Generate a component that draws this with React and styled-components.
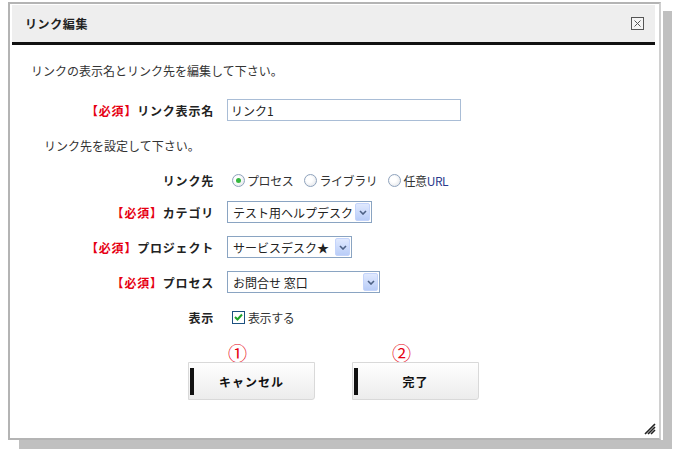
import React from 'react'
import styled, { createGlobalStyle } from 'styled-components'

//Component
function App() {
  return (
    <>
      <GlobalStyle />
      <Page>
        <Dialog>
          <TitleBar>
            <Title>リンク編集</Title>
            <CloseButton aria-label="閉じる">
              <svg width="13" height="13" viewBox="0 0 13 13">
                <rect x="0.5" y="0.5" width="12" height="12" fill="#f4f4f4" stroke="#555" />
                <path d="M3.5 3.5 L9.5 9.5 M9.5 3.5 L3.5 9.5" stroke="#555" strokeWidth="1" />
              </svg>
            </CloseButton>
          </TitleBar>

          <Body>
            <Intro>リンクの表示名とリンク先を編集して下さい。</Intro>

            <Row $mt={20}>
              <Label><Required>【必須】</Required>リンク表示名</Label>
              <TextInput defaultValue="リンク1" />
            </Row>

            <Note>リンク先を設定して下さい。</Note>

            <Row $mt={18} $h={16}>
              <Label>リンク先</Label>
              <Choice>
                <Radio $checked />プロセス
              </Choice>
              <Choice>
                <Radio />ライブラリ
              </Choice>
              <Choice>
                <Radio />任意<Latin>URL</Latin>
              </Choice>
            </Row>

            <Row $mt={13}>
              <Label><Required>【必須】</Required>カテゴリ</Label>
              <Select $w={145}>
                <SelectValue>テスト用ヘルプデスク</SelectValue>
                <SelectArrow><Chevron /></SelectArrow>
              </Select>
            </Row>

            <Row $mt={13}>
              <Label><Required>【必須】</Required>プロジェクト</Label>
              <Select $w={125}>
                <SelectValue>サービスデスク★</SelectValue>
                <SelectArrow><Chevron /></SelectArrow>
              </Select>
            </Row>

            <Row $mt={13}>
              <Label><Required>【必須】</Required>プロセス</Label>
              <Select $w={153}>
                <SelectValue>お問合せ 窓口</SelectValue>
                <SelectArrow><Chevron /></SelectArrow>
              </Select>
            </Row>

            <Row $mt={13}>
              <Label>表示</Label>
              <Choice>
                <CheckBox>
                  <svg width="9" height="8" viewBox="0 0 9 8">
                    <path d="M1 4 L3.5 6.5 L8 1.5" fill="none" stroke="#1fa32a" strokeWidth="2" />
                  </svg>
                </CheckBox>
                表示する
              </Choice>
            </Row>

            <Actions>
              <ActionGroup>
                <Mark>①</Mark>
                <ActionButton><ButtonBar /><span>キャンセル</span></ActionButton>
              </ActionGroup>
              <ActionGroup>
                <Mark>②</Mark>
                <ActionButton><ButtonBar /><span>完了</span></ActionButton>
              </ActionGroup>
            </Actions>
          </Body>

          <Grip>
            <svg width="12" height="12" viewBox="0 0 12 12">
              <path d="M1 11 L11 1 M4 11 L11 4 M7 11 L11 7" stroke="#222" strokeWidth="1.6" />
            </svg>
          </Grip>
        </Dialog>
      </Page>
    </>
  )
}

function Chevron() {
  return (
    <svg width="8" height="5" viewBox="0 0 8 5">
      <path d="M1 1 L4 4 L7 1" fill="none" stroke="#4d6185" strokeWidth="1.6" />
    </svg>
  )
}

//Styling
const GlobalStyle = createGlobalStyle`
  html, body {
    margin: 0;
    background: #fff;
  }
  body {
    font-family: "Noto Sans CJK JP", "Liberation Sans", sans-serif;
    font-size: 12px;
    color: #222;
  }
`

const Page = styled.div`
  padding: 2px 0 0 8px;
  height: 456px;
  box-sizing: border-box;
`

const Dialog = styled.div`
  position: relative;
  width: 653px;
  height: 438px;
  box-sizing: border-box;
  border: 2px solid #b4b4b4;
  border-right-color: #d0d0d0;
  padding: 1px 4px 0 2px;
  background: #fff;
  box-shadow: 2px 0 0 #fff, 11px 9px 0 #c0c0c0;
`

const TitleBar = styled.div`
  display: flex;
  align-items: center;
  justify-content: space-between;
  height: 37px;
  padding: 0 11px 0 13px;
  background: #eeeeee;
  border-bottom: 3px solid #111;
`

const Title = styled.div`
  font-weight: bold;
  letter-spacing: 0.6px;
  color: #222;
`

const CloseButton = styled.button`
  display: flex;
  padding: 0;
  border: none;
  background: none;
  cursor: pointer;
`

const Body = styled.div`
  padding: 18px 0 0 19px;
`

const Intro = styled.div`
  line-height: 16px;
  color: #333;
`

const Note = styled.div`
  margin: 17px 0 0 13px;
  line-height: 16px;
  color: #333;
`

const Row = styled.div`
  display: flex;
  align-items: center;
  height: ${p => p.$h || 22}px;
  margin-top: ${p => p.$mt || 0}px;
`

const Label = styled.div`
  flex: none;
  width: 183px;
  margin-right: 13px;
  text-align: right;
  white-space: nowrap;
  font-weight: bold;
  letter-spacing: 0.8px;
  color: #222;
`

const Required = styled.span`
  color: #e60012;
`

const TextInput = styled.input`
  width: 234px;
  height: 22px;
  box-sizing: border-box;
  border: 1px solid #a9bdd6;
  padding: 0 3px;
  font: inherit;
  color: #222;
  outline: none;
`

const Choice = styled.label`
  display: inline-flex;
  align-items: center;
  margin-right: 6px;
  color: #333;
  letter-spacing: -0.4px;
  white-space: nowrap;
`

const Latin = styled.span`
  color: #2b3a8c;
`

const Radio = styled.span`
  position: relative;
  display: inline-block;
  width: 11px;
  height: 11px;
  margin: 0 2px 0 5px;
  border: 1px solid #8fa3bd;
  border-radius: 50%;
  background: radial-gradient(circle at 40% 40%, #fff 30%, #dcdfe4 100%);
  &::after {
    content: '';
    display: ${p => (p.$checked ? 'block' : 'none')};
    position: absolute;
    left: 3px;
    top: 3px;
    width: 5px;
    height: 5px;
    border-radius: 50%;
    background: #35b73f;
  }
`

const CheckBox = styled.span`
  display: inline-grid;
  place-items: center;
  width: 11px;
  height: 11px;
  margin: 0 3px 0 5px;
  border: 1px solid #1c5180;
  background: #fff;
`

const Select = styled.div`
  display: flex;
  align-items: center;
  width: ${p => p.$w}px;
  height: 22px;
  box-sizing: border-box;
  padding: 1px;
  border: 1px solid #8aa4c2;
  background: #fff;
`

const SelectValue = styled.span`
  flex: 1;
  min-width: 0;
  padding-left: 4px;
  overflow: hidden;
  white-space: nowrap;
  color: #222;
`

const SelectArrow = styled.span`
  flex: none;
  display: grid;
  place-items: center;
  width: 15px;
  height: 18px;
  box-sizing: border-box;
  border: 1px solid #c4d4fb;
  border-radius: 2px;
  background: linear-gradient(#e0e9fe, #b9cdf8);
`

const Actions = styled.div`
  display: flex;
  gap: 37px;
  margin: 15px 0 0 157px;
`

const ActionGroup = styled.div`
  display: flex;
  flex-direction: column;
`

const Mark = styled.div`
  margin-left: 40px;
  height: 19px;
  line-height: 19px;
  font-size: 19px;
  color: #e60012;
`

const ActionButton = styled.button`
  display: grid;
  grid-template-columns: 6px 1fr 6px;
  align-items: center;
  width: 127px;
  height: 38px;
  padding: 0;
  border: 1px solid #d9d9d9;
  border-radius: 0 0 3px 0;
  background: linear-gradient(#fefefe, #ececec);
  font: inherit;
  font-weight: bold;
  letter-spacing: 1px;
  color: #111;
  cursor: pointer;
  span:last-child {
    text-align: center;
  }
`

const ButtonBar = styled.span`
  width: 4px;
  height: 27px;
  margin-left: 1px;
  background: #111;
`

const Grip = styled.div`
  position: absolute;
  right: 3px;
  bottom: 3px;
  display: flex;
`

export default App
